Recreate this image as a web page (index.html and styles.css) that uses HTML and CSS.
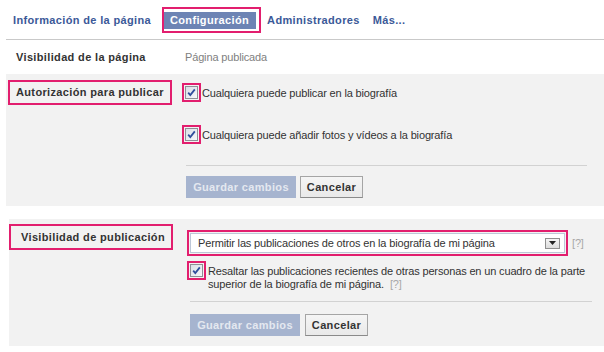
FILE: index.html
```html
<!DOCTYPE html>
<html lang="es">
<head>
<meta charset="utf-8">
<title>Configuración</title>
<link rel="stylesheet" href="styles.css">
</head>
<body>
<div class="page">
  <nav class="tabs">
    <a class="tab">Información de la página</a>
    <span class="hl tab-hl"><span class="tab-active">Configuración</span></span>
    <a class="tab tab-admin">Administradores</a>
    <a class="tab tab-more">Más...</a>
  </nav>

  <div class="static">
    <div class="static-label">Visibilidad de la página</div>
    <div class="static-value">Página publicada</div>
  </div>

  <section class="section s1">
    <div class="label-cell"><span class="hl label-box">Autorización para publicar</span></div>
    <div class="content">
      <div class="check-row">
        <span class="hl cb-hl"><svg class="cb" width="13" height="13" viewBox="0 0 13 13"><defs><linearGradient id="g1" x1="0" y1="0" x2="1" y2="1"><stop offset="0" stop-color="#d9dde6"/><stop offset="1" stop-color="#f7f8fa"/></linearGradient></defs><rect x="0.5" y="0.5" width="12" height="12" fill="url(#g1)" stroke="#8e8f96"/><path d="M3.2 6.6 L5.3 9 L9.8 3.4" fill="none" stroke="#2f4d9c" stroke-width="1.8"/></svg></span>
        <span class="check-text">Cualquiera puede publicar en la biografía</span>
      </div>
      <div class="check-row row2">
        <span class="hl cb-hl"><svg class="cb" width="13" height="13" viewBox="0 0 13 13"><rect x="0.5" y="0.5" width="12" height="12" fill="url(#g1)" stroke="#8e8f96"/><path d="M3.2 6.6 L5.3 9 L9.8 3.4" fill="none" stroke="#2f4d9c" stroke-width="1.8"/></svg></span>
        <span class="check-text">Cualquiera puede añadir fotos y vídeos a la biografía</span>
      </div>
      <div class="sep sep1"></div>
      <div class="buttons b1">
        <span class="btn btn-save">Guardar cambios</span>
        <span class="btn btn-cancel">Cancelar</span>
      </div>
    </div>
  </section>

  <section class="section s2">
    <div class="label-cell"><span class="hl label-box label-box2">Visibilidad de publicación</span></div>
    <div class="content">
      <div class="select-row">
        <span class="hl select-hl">
          <span class="select">
            <span class="select-text">Permitir las publicaciones de otros en la biografía de mi página</span>
            <span class="select-arrow"><svg width="7" height="4" viewBox="0 0 7 4"><path d="M0 0 H7 L3.5 4 Z" fill="#222"/></svg></span>
          </span>
        </span>
        <span class="help">[?]</span>
      </div>
      <div class="check-row row3">
        <span class="hl cb-hl"><svg class="cb" width="13" height="13" viewBox="0 0 13 13"><rect x="0.5" y="0.5" width="12" height="12" fill="url(#g1)" stroke="#8e8f96"/><path d="M3.2 6.6 L5.3 9 L9.8 3.4" fill="none" stroke="#2f4d9c" stroke-width="1.8"/></svg></span>
        <div class="multi">
          <div>Resaltar las publicaciones recientes de otras personas en un cuadro de la parte</div>
          <div class="line2"><span>superior de la biografía de mi página.</span><span class="help help-inline">[?]</span></div>
        </div>
      </div>
      <div class="sep sep2"></div>
      <div class="buttons b2">
        <span class="btn btn-save">Guardar cambios</span>
        <span class="btn btn-cancel">Cancelar</span>
      </div>
    </div>
  </section>
</div>
</body>
</html>
```

FILE: styles.css
```css
* { box-sizing: border-box; }

body {
  margin: 0;
  background: #fff;
  font-family: "Liberation Sans", Arial, sans-serif;
  font-size: 11px;
  color: #333;
  letter-spacing: -0.15px;
}

.page { padding-left: 6px; }

.hl { border: 2px solid #e21e6e; }

/* tabs */
.tabs {
  display: flex;
  align-items: center;
  height: 40px;
  padding-left: 7px;
  border-bottom: 1px solid #c9c9c9;
}
.tab {
  font-weight: bold;
  color: #3b5998;
  letter-spacing: 0.35px;
}
.tab-hl {
  margin-left: 11px;
  padding: 3px 3px 2px 0;
}
.tab-active {
  display: block;
  background: #6d84b4;
  color: #fff;
  font-weight: bold;
  letter-spacing: 0.35px;
  line-height: 17px;
  padding: 0 7px 0 6px;
}
.tab-admin { margin-left: 6px; }
.tab-more { margin-left: 13px; }

/* static row */
.static {
  display: grid;
  grid-template-columns: 179px 1fr;
  align-items: center;
  height: 34px;
}
.static-label {
  padding-left: 10px;
  font-weight: bold;
  letter-spacing: 0.35px;
}
.static-value { color: #808080; }

/* sections */
.section {
  display: grid;
  align-items: start;
  background: #f2f2f2;
}
.s1 {
  grid-template-columns: 176px 1fr;
  padding-bottom: 8px;
}
.s2 {
  grid-template-columns: 178px 1fr;
  margin-top: 13px;
  margin-left: 3px;
  padding-bottom: 10px;
}
.s1 .label-cell { padding: 6px 0 0 2px; }
.s2 .label-cell { padding-top: 5px; }

.label-box {
  display: inline-block;
  font-weight: bold;
  letter-spacing: 0.35px;
  line-height: 21px;
  padding: 0 6px;
}
.label-box2 {
  width: 164px;
  line-height: 22px;
  padding: 0 0 0 10px;
}

.s1 .content { padding-top: 9px; }
.s2 .content { padding-top: 11px; }

.check-row {
  display: flex;
  align-items: center;
}
.row2 { margin-top: 23px; }
.row3 {
  align-items: flex-start;
  margin-top: 5px;
}
.cb-hl {
  display: flex;
  flex: none;
  padding: 1px;
}
.cb { display: block; }
.check-text { margin-left: 1px; }
.multi {
  margin-left: 2px;
  margin-top: 4px;
  line-height: 13px;
  white-space: nowrap;
}
.line2 { display: flex; }

.sep {
  height: 1px;
  background: #d2d2d2;
}
.sep1 { margin: 21px 17px 0 4px; }
.sep2 { margin: 10px 12px 0 3px; }

.buttons { display: flex; }
.b1 { margin: 10px 0 0 4px; gap: 4px; }
.b2 { margin: 12px 0 0 3px; gap: 5px; }

.btn {
  display: block;
  height: 22px;
  line-height: 20px;
  text-align: center;
  font-weight: bold;
  letter-spacing: 0.35px;
  border: 1px solid;
}
.btn-save {
  width: 110px;
  background: #a6b4cf;
  border-color: #a6b4cf;
  color: #e4e8f0;
}
.btn-cancel {
  width: 63px;
  background: linear-gradient(#f5f5f5, #e9e9e9);
  border-color: #a5a5a5 #a5a5a5 #8a8a8a;
  color: #333;
}

/* select */
.select-row {
  display: flex;
  align-items: center;
}
.select-hl {
  display: block;
  width: 381px;
  padding: 1px;
}
.select {
  display: flex;
  align-items: center;
  justify-content: space-between;
  height: 20px;
  padding: 0 4px 0 7px;
  background: #fff;
  border: 1px solid #bdc7d8;
}
.select-text { white-space: nowrap; }
.select-arrow {
  display: flex;
  align-items: center;
  justify-content: center;
  width: 15px;
  height: 11px;
  background: linear-gradient(#f4f4f4, #dcdcdc);
  border: 1px solid #8f8f8f;
}
.help {
  color: #a8a8a8;
  margin-left: 4px;
}
.help-inline { margin-left: 6px; }
```
